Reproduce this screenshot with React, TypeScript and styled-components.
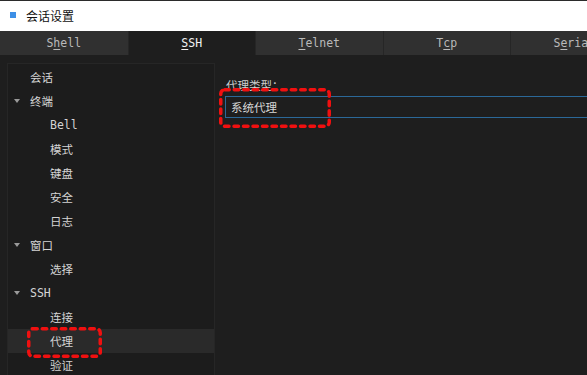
import React from 'react'
import styled, { createGlobalStyle } from 'styled-components'

const Global = createGlobalStyle`
  html, body {
    margin: 0;
    padding: 0;
    background: #1e1e1e;
    overflow: hidden;
  }
  body {
    font-family: "DejaVu Sans Mono", "Noto Sans CJK SC", monospace;
  }
`

const Window = styled.div`
  width: 587px;
  height: 375px;
  display: flex;
  flex-direction: column;
  background: #1e1e1e;
  border-top: 1px solid #2b2b2b;
  box-sizing: border-box;
  overflow: hidden;
`

const TitleBar = styled.div`
  height: 30px;
  background: #ffffff;
  display: flex;
  align-items: center;
  padding-left: 10px;
  padding-bottom: 2px;
  box-sizing: border-box;
  gap: 10px;
  flex-shrink: 0;
`

const TitleIcon = styled.span`
  width: 6px;
  height: 6px;
  background: #3d8fe6;
`

const Title = styled.span`
  font-family: "Noto Sans CJK SC", sans-serif;
  font-size: 12px;
  color: #111;
`

const TabBar = styled.div`
  height: 24px;
  display: flex;
  background: #303030;
  flex-shrink: 0;
`

const Tab = styled.div<{ $active?: boolean }>`
  width: 127.5px;
  flex-shrink: 0;
  box-sizing: border-box;
  border-left: 1px solid #262626;
  background: ${p => (p.$active ? '#1e1e1e' : '#303030')};
  color: ${p => (p.$active ? '#f2f2f2' : '#bababa')};
  font-size: 11.5px;
  display: flex;
  align-items: center;
  justify-content: center;
  &:first-child {
    border-left: 0;
  }
  u {
    text-decoration-thickness: 1px;
    text-underline-offset: 2px;
  }
`

const Body = styled.div`
  flex: 1;
  display: flex;
  padding: 8px 0 0 7px;
  gap: 10px;
`

const Tree = styled.div`
  width: 208px;
  flex-shrink: 0;
  box-sizing: border-box;
  border: 1px solid #262626;
  border-bottom: 0;
  background: #1c1c1c;
  padding-top: 1px;
`

const Row = styled.div<{ $level: number; $selected?: boolean }>`
  position: relative;
  height: 24px;
  display: flex;
  align-items: center;
  padding-left: ${p => (p.$level === 0 ? 22 : 42)}px;
  background: ${p => (p.$selected ? '#2a2a2a' : 'transparent')};
  color: #d4d4d4;
  font-size: 11.5px;
`

const Caret = styled.span`
  position: absolute;
  left: 6px;
  top: 10px;
  width: 0;
  height: 0;
  border-left: 3.5px solid transparent;
  border-right: 3.5px solid transparent;
  border-top: 4px solid #9a9a9a;
`

const Content = styled.div`
  flex: 1;
  display: flex;
  flex-direction: column;
  padding-top: 14px;
`

const Label = styled.div`
  font-family: "Noto Sans CJK SC", sans-serif;
  font-size: 11.5px;
  color: #cfcfcf;
  margin-left: 1px;
  height: 16px;
  line-height: 16px;
`

const Field = styled.div`
  position: relative;
  margin-top: 3px;
  height: 22px;
  box-sizing: border-box;
  border: 1px solid #2b6898;
  border-right: 0;
  display: flex;
  align-items: center;
  padding-left: 5px;
  margin-right: -20px;
  color: #d8d8d8;
  font-family: "Noto Sans CJK SC", sans-serif;
  font-size: 11.5px;
`

const Mark = styled.svg<{ $top: number; $left: number; $w: number; $h: number }>`
  position: absolute;
  top: ${p => p.$top}px;
  left: ${p => p.$left}px;
  width: ${p => p.$w}px;
  height: ${p => p.$h}px;
  overflow: visible;
  pointer-events: none;
`

const Highlight = ({ top, left, w, h }: { top: number; left: number; w: number; h: number }) => (
  <Mark $top={top} $left={left} $w={w} $h={h} viewBox={`0 0 ${w} ${h}`}>
    <rect
      x={1.75}
      y={1.75}
      width={w - 3.5}
      height={h - 3.5}
      rx={4}
      fill="none"
      stroke="#f01010"
      strokeWidth={3.5}
      strokeDasharray="4.5 5"
      strokeLinecap="round"
    />
  </Mark>
)

const tabs: [string, number][] = [
  ['Shell', 1],
  ['SSH', 0],
  ['Telnet', 0],
  ['Tcp', 1],
  ['Serial', 1],
]

const tree: { label: string; level: number; open?: boolean; selected?: boolean }[] = [
  { label: '会话', level: 0 },
  { label: '终端', level: 0, open: true },
  { label: 'Bell', level: 1 },
  { label: '模式', level: 1 },
  { label: '键盘', level: 1 },
  { label: '安全', level: 1 },
  { label: '日志', level: 1 },
  { label: '窗口', level: 0, open: true },
  { label: '选择', level: 1 },
  { label: 'SSH', level: 0, open: true },
  { label: '连接', level: 1 },
  { label: '代理', level: 1, selected: true },
  { label: '验证', level: 1 },
]

export default function App() {
  return (
    <Window>
      <Global />
      <TitleBar>
        <TitleIcon />
        <Title>会话设置</Title>
      </TitleBar>
      <TabBar>
        {tabs.map(([name, k]) => (
          <Tab key={name} $active={name === 'SSH'}>
            {name.slice(0, k)}
            <u>{name[k]}</u>
            {name.slice(k + 1)}
          </Tab>
        ))}
      </TabBar>
      <Body>
        <Tree>
          {tree.map(item => (
            <Row key={item.label} $level={item.level} $selected={item.selected}>
              {item.open && <Caret />}
              {item.label}
              {item.selected && <Highlight top={-2} left={19} w={75} h={31} />}
            </Row>
          ))}
        </Tree>
        <Content>
          <Label>代理类型：</Label>
          <Field>
            系统代理
            <Highlight top={-9} left={-7} w={112} h={40} />
          </Field>
        </Content>
      </Body>
    </Window>
  )
}
